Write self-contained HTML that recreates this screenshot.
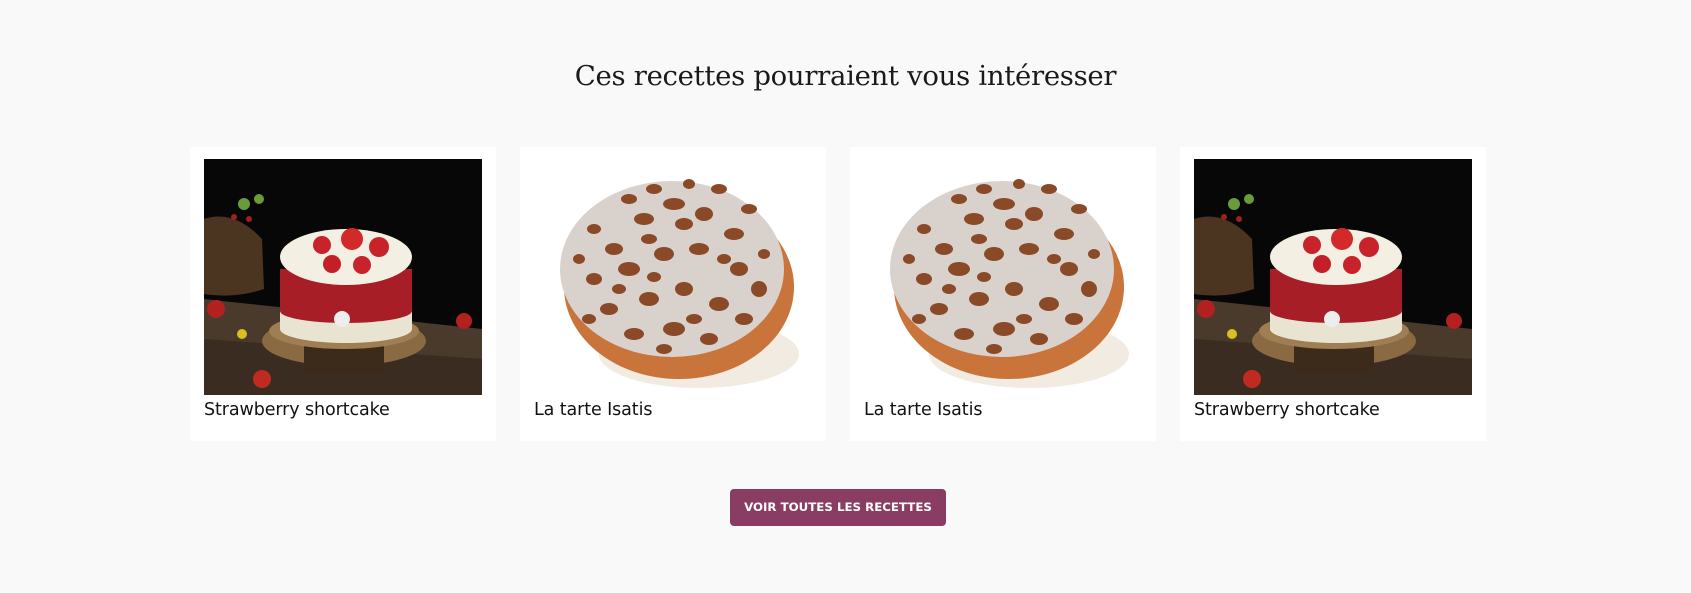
<!DOCTYPE html>
<html><head><meta charset="utf-8"><style>
html,body{margin:0;padding:0;width:1691px;height:593px;background:#f9f9f9;overflow:hidden;position:relative}
h2{position:absolute;left:0;width:1691px;top:60px;margin:0;text-align:center;font:400 27.5px "DejaVu Serif","Liberation Serif",serif;color:#1a1a1a;letter-spacing:-0.3px}
.card{position:absolute;top:147px;width:306px;height:294px;background:#fff}
.card svg{position:absolute;left:14px;top:12px;width:278px;height:236px;display:block}
.card .t{position:absolute;left:14px;top:253px;font:500 17.5px "DejaVu Sans","Liberation Sans",sans-serif;color:#111;letter-spacing:-0.1px}
.btn{position:absolute;left:730px;top:489px;width:216px;height:37px;background:#8a3d63;border-radius:4px;color:#fff;font:700 11.8px "DejaVu Sans","Liberation Sans",sans-serif;text-align:center;line-height:37px}
</style></head><body>
<h2>Ces recettes pourraient vous intéresser</h2>

<svg width="0" height="0" style="position:absolute">
<defs>
<symbol id="cake" viewBox="0 0 278 236">
<rect width="278" height="236" fill="#070707"/>
<path d="M0 140 L278 170 L278 236 L0 236Z" fill="#4a3a2c"/>
<path d="M0 180 L278 200 L278 236 L0 236Z" fill="#3a2c20"/>
<path d="M0 60 Q30 50 58 80 L60 130 Q30 140 0 135Z" fill="#4c3520"/>
<circle cx="40" cy="45" r="6" fill="#6a9a3a"/><circle cx="55" cy="40" r="5" fill="#6a9a3a"/>
<circle cx="30" cy="58" r="3" fill="#a02020"/><circle cx="45" cy="60" r="3" fill="#a02020"/>
<ellipse cx="140" cy="182" rx="82" ry="25" fill="#8a6a42"/>
<rect x="100" y="185" width="80" height="28" fill="#3c2a1a"/>
<ellipse cx="140" cy="172" rx="75" ry="18" fill="#a07e54"/>
<rect x="76" y="118" width="132" height="52" fill="#e9e4d2"/>
<ellipse cx="142" cy="170" rx="66" ry="14" fill="#e9e4d2"/>
<rect x="76" y="110" width="132" height="42" fill="#a81e26"/>
<ellipse cx="142" cy="152" rx="66" ry="12" fill="#a81e26"/>
<ellipse cx="142" cy="98" rx="66" ry="28" fill="#f3efe2"/>
<circle cx="118" cy="86" r="9" fill="#c8222a"/><circle cx="148" cy="80" r="11" fill="#d22a2a"/><circle cx="175" cy="88" r="10" fill="#c8222a"/><circle cx="128" cy="105" r="9" fill="#c41e26"/><circle cx="158" cy="106" r="9" fill="#c8222a"/>
<circle cx="138" cy="160" r="8" fill="#eee"/>
<circle cx="12" cy="150" r="9" fill="#b22020"/><circle cx="260" cy="162" r="8" fill="#b22020"/><circle cx="58" cy="220" r="9" fill="#c02a20"/>
<circle cx="38" cy="175" r="5" fill="#d8c020"/>
</symbol>
<symbol id="tart" viewBox="0 0 278 236">
<rect width="278" height="236" fill="#fff"/>
<ellipse cx="165" cy="195" rx="100" ry="34" fill="#f1ebe2"/>
<ellipse cx="145" cy="128" rx="115" ry="92" fill="#c8743a"/>
<ellipse cx="138" cy="110" rx="112" ry="88" fill="#d9d2cc"/>
<g fill="#8a4a28">
<ellipse cx="80" cy="90" rx="9" ry="6"/><ellipse cx="110" cy="60" rx="10" ry="6"/><ellipse cx="140" cy="45" rx="11" ry="6"/><ellipse cx="170" cy="55" rx="9" ry="7"/><ellipse cx="200" cy="75" rx="10" ry="6"/>
<ellipse cx="60" cy="120" rx="8" ry="6"/><ellipse cx="95" cy="110" rx="11" ry="7"/><ellipse cx="130" cy="95" rx="10" ry="7"/><ellipse cx="165" cy="90" rx="10" ry="6"/><ellipse cx="205" cy="110" rx="9" ry="7"/><ellipse cx="225" cy="130" rx="8" ry="8"/>
<ellipse cx="75" cy="150" rx="9" ry="6"/><ellipse cx="115" cy="140" rx="10" ry="7"/><ellipse cx="150" cy="130" rx="9" ry="7"/><ellipse cx="185" cy="145" rx="10" ry="7"/>
<ellipse cx="100" cy="175" rx="10" ry="6"/><ellipse cx="140" cy="170" rx="11" ry="7"/><ellipse cx="175" cy="180" rx="9" ry="6"/><ellipse cx="120" cy="30" rx="8" ry="5"/><ellipse cx="155" cy="25" rx="6" ry="5"/>
<ellipse cx="45" cy="100" rx="6" ry="5"/><ellipse cx="230" cy="95" rx="6" ry="5"/><ellipse cx="130" cy="190" rx="8" ry="5"/>
<ellipse cx="95" cy="40" rx="8" ry="5"/><ellipse cx="185" cy="30" rx="8" ry="5"/><ellipse cx="215" cy="50" rx="8" ry="5"/><ellipse cx="60" cy="70" rx="7" ry="5"/><ellipse cx="150" cy="65" rx="9" ry="6"/><ellipse cx="115" cy="80" rx="8" ry="5"/><ellipse cx="190" cy="100" rx="7" ry="5"/><ellipse cx="85" cy="130" rx="7" ry="5"/><ellipse cx="210" cy="160" rx="9" ry="6"/><ellipse cx="160" cy="160" rx="8" ry="5"/><ellipse cx="55" cy="160" rx="7" ry="5"/><ellipse cx="120" cy="118" rx="7" ry="5"/>
</g>
</symbol>
</defs></svg>

<div class="card" style="left:190px"><svg><use href="#cake"/></svg><div class="t">Strawberry shortcake</div></div>
<div class="card" style="left:520px"><svg><use href="#tart"/></svg><div class="t">La tarte Isatis</div></div>
<div class="card" style="left:850px"><svg><use href="#tart"/></svg><div class="t">La tarte Isatis</div></div>
<div class="card" style="left:1180px"><svg><use href="#cake"/></svg><div class="t">Strawberry shortcake</div></div>

<div class="btn">VOIR TOUTES LES RECETTES</div>
</body></html>
